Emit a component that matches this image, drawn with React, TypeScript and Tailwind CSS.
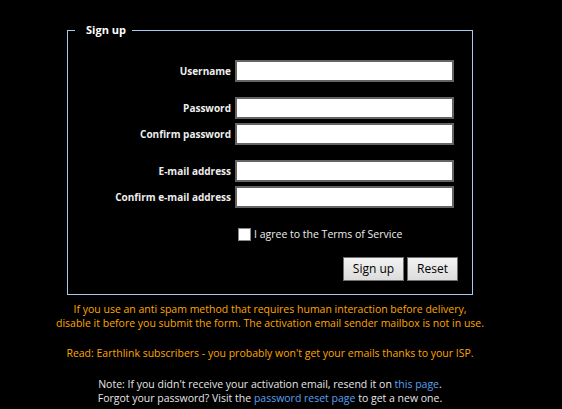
const font = { fontFamily: '"Open Sans", "Noto Sans", sans-serif' };

function Field({ label, className = "" }: { label: string; className?: string }) {
  return (
    <>
      <label className={`text-right text-[10px] font-bold text-[#eeeeee] leading-[22px] ${className}`}>{label}</label>
      <input type="text" className={`h-[22px] w-[219px] border-2 border-[#646464] bg-white px-1 text-[12px] text-black outline-none ${className}`} />
    </>
  );
}

export default function App() {
  return (
    <div className="min-h-[409px] bg-black text-[10.5px]" style={font}>
      <div className="w-[540px] pt-[22px] text-center">
        <fieldset className="ml-[67px] w-[406px] border border-[#a6cbee] pb-[13px] text-left">
          <legend className="ml-[7px] pl-[11px] pr-[6px] text-[11px] font-bold leading-[16px] text-white">Sign up</legend>
          <div className="mt-[22px] grid grid-cols-[163px_219px] gap-x-[4px] gap-y-[4px]">
            <Field label="Username" className="mb-[11px]" />
            <Field label="Password" />
            <Field label="Confirm password" className="mb-[11px]" />
            <Field label="E-mail address" />
            <Field label="Confirm e-mail address" />
          </div>
          <div className="mt-[19px] flex items-center pl-[170px] text-[#eeeeee]">
            <input type="checkbox" className="m-0 h-[13px] w-[13px] appearance-none border border-[#888] bg-white" />
            <span className="ml-[3px]">I agree to the Terms of Service</span>
          </div>
          <div className="mt-[14px] flex justify-end gap-[3px] pr-[14px]">
            <button className="h-[24px] w-[61px] border border-[#707070] bg-gradient-to-b from-[#f3f3f3] to-[#dcdcdc] text-[12px] text-black">Sign up</button>
            <button className="h-[24px] w-[51px] border border-[#707070] bg-gradient-to-b from-[#f3f3f3] to-[#dcdcdc] text-[12px] text-black">Reset</button>
          </div>
        </fieldset>
        <div className="mt-[7px] leading-[14px] text-[#ffa500]">
          <p>If you use an anti spam method that requires human interaction before delivery,<br />disable it before you submit the form. The activation email sender mailbox is not in use.</p>
          <p className="mt-[16px]">Read: Earthlink subscribers - you probably won't get your emails thanks to your ISP.</p>
        </div>
        <div className="mt-[17px] leading-[14px] text-[#e6e6e6]">
          <p>Note: If you didn't receive your activation email, resend it on <a className="text-[#5aa0f0]">this page</a>.</p>
          <p>Forgot your password? Visit the <a className="text-[#5aa0f0]">password reset page</a> to get a new one.</p>
        </div>
      </div>
    </div>
  );
}
